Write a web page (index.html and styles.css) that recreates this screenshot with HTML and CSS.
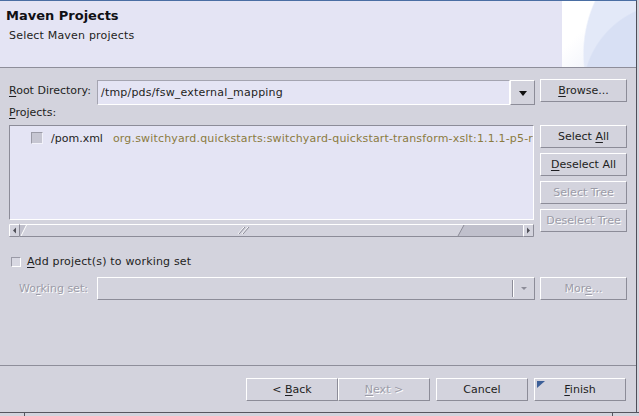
FILE: index.html
```html
<!DOCTYPE html>
<html>
<head>
<meta charset="utf-8">
<title>Maven Projects</title>
<link rel="stylesheet" href="styles.css">
</head>
<body>
<div class="frame">
  <div class="banner">
    <div class="titles">
      <div class="title">Maven Projects</div>
      <div class="subtitle">Select Maven projects</div>
    </div>
    <div class="corner"></div>
  </div>
  <div class="content">
    <div class="row root-row">
      <div class="lbl lbl-root"><u>R</u>oot Directory:</div>
      <div class="combo edit">
        <div class="combo-text">/tmp/pds/fsw_external_mapping</div>
        <div class="combo-btn"><span class="arrow-down"></span></div>
      </div>
      <button class="btn side"><u>B</u>rowse...</button>
    </div>
    <div class="lbl projects-lbl"><u>P</u>rojects:</div>
    <div class="row tree-row">
      <div class="treewrap">
        <div class="tree">
          <div class="tree-item">
            <span class="check"></span>
            <span class="pom">/pom.xml</span>
            <span class="gav">org.switchyard.quickstarts:switchyard-quickstart-transform-xslt:1.1.1-p5-redhat-1</span>
          </div>
        </div>
        <svg class="hscroll" width="525" height="13" viewBox="0 0 525 13">
          <rect x="0" y="0" width="525" height="13" fill="#c0c0cc"/>
          <line x1="0" y1="0.5" x2="525" y2="0.5" stroke="#ffffff"/>
          <line x1="0" y1="12.5" x2="525" y2="12.5" stroke="#8c8c98"/>
          <rect x="0" y="0" width="11" height="13" fill="#d3d3dd"/>
          <polyline points="0.5,12 0.5,0.5 10.5,0.5" fill="none" stroke="#ffffff"/>
          <polyline points="0.5,12.5 10.5,12.5 10.5,0.5" fill="none" stroke="#8c8c98"/>
          <polygon points="4,6.5 7,3.5 7,9.5" fill="#505058"/>
          <polygon points="12,12 17,1 455,1 449,12" fill="#d3d3dd"/>
          <line x1="17" y1="0.5" x2="455" y2="0.5" stroke="#ffffff"/>
          <line x1="12" y1="12" x2="17.5" y2="1" stroke="#ffffff"/>
          <line x1="449" y1="12" x2="455" y2="1" stroke="#8c8c98"/>
          <line x1="12" y1="12.5" x2="449" y2="12.5" stroke="#8c8c98"/>
          <g stroke-width="1">
            <line x1="229" y1="10" x2="235" y2="3" stroke="#ffffff"/>
            <line x1="230" y1="10" x2="236" y2="3" stroke="#8c8c98"/>
            <line x1="233" y1="10" x2="239" y2="3" stroke="#ffffff"/>
            <line x1="234" y1="10" x2="240" y2="3" stroke="#8c8c98"/>
          </g>
          <rect x="514" y="0" width="11" height="13" fill="#d3d3dd"/>
          <polyline points="514.5,12 514.5,0.5 524.5,0.5" fill="none" stroke="#ffffff"/>
          <polyline points="514.5,12.5 524.5,12.5 524.5,0.5" fill="none" stroke="#8c8c98"/>
          <polygon points="521,6.5 518,3.5 518,9.5" fill="#505058"/>
        </svg>
      </div>
      <div class="side-col">
        <button class="btn side">Select <u>A</u>ll</button>
        <button class="btn side"><u>D</u>eselect All</button>
        <button class="btn side disabled">Select Tree</button>
        <button class="btn side disabled">Deselect Tree</button>
      </div>
    </div>
    <div class="ws-check">
      <span class="check small"></span>
      <span class="wide"><u>A</u>dd project(s) to working set</span>
    </div>
    <div class="row ws-row">
      <div class="lbl lbl-ws disabled">Wo<u>r</u>king set:</div>
      <div class="combo ro">
        <div class="combo-fill"></div>
        <div class="combo-arrow"><span class="arrow-small"></span></div>
      </div>
      <button class="btn side disabled">Mor<u>e</u>...</button>
    </div>
  </div>
  <div class="footer">
    <button class="btn foot">&lt; <u>B</u>ack</button>
    <button class="btn foot disabled"><u>N</u>ext &gt;</button>
    <button class="btn foot gap">Cancel</button>
    <button class="btn foot gap default"><span class="flag"></span><u>F</u>inish</button>
  </div>
</div>
<div class="under">
  <span class="u1"></span><span class="u2"></span><span class="u3"></span>
</div>
</body>
</html>
```

FILE: styles.css
```css
html, body {
  margin: 0;
  padding: 0;
}
body {
  background: #d3d3dd;
  font-family: "DejaVu Sans", sans-serif;
  font-size: 11px;
  color: #1e1e22;
  width: 639px;
  height: 416px;
  overflow: hidden;
}
u {
  text-decoration: underline;
  text-underline-offset: 2px;
}
.frame {
  width: 636px;
  height: 411px;
  border-top: 1px solid #4a6ea3;
  border-right: 1px solid #4e4e58;
  display: flex;
  flex-direction: column;
}
.banner {
  height: 66px;
  display: flex;
  background: #e4e4f4;
  border-bottom: 1px solid #8e8e9a;
  flex: none;
}
.titles {
  flex: 1;
  padding: 7px 0 0 6px;
}
.title {
  font-weight: bold;
  font-size: 13px;
  line-height: 16px;
  color: #101014;
}
.subtitle {
  margin: 5px 0 0 3px;
  line-height: 14px;
  font-size: 11px;
  letter-spacing: 0.19px;
}
.corner {
  width: 74px;
  background:
    radial-gradient(circle at 150% 140%, #d8e0f4 0 62%, rgba(216,224,244,0) 63%),
    radial-gradient(circle at 200% 80%, #e3e9f8 0 80%, rgba(227,233,248,0) 81%),
    linear-gradient(135deg, #ffffff 35%, #e6ebf8 100%);
}
.content {
  flex: 1;
  padding: 11px 0 0 9px;
}
.row {
  display: flex;
  align-items: flex-start;
}
.lbl {
  white-space: nowrap;
}
.lbl-root {
  width: 88px;
  line-height: 23px;
}
.combo {
  width: 438px;
  box-sizing: border-box;
  display: flex;
}
.combo.edit {
  height: 25px;
  margin-top: 1px;
}
.combo-text {
  flex: 1;
  background: #e4e4f4;
  border: 1px solid;
  border-color: #a4a4b0 #ffffff #ffffff #a4a4b0;
  padding-left: 3px;
  line-height: 23px;
  white-space: nowrap;
  overflow: hidden;
  letter-spacing: 0.2px;
}
.combo-btn {
  width: 25px;
  box-sizing: border-box;
  border: 1px solid;
  border-color: #ffffff #8c8c98 #8c8c98 #ffffff;
  background: #d3d3dd;
  display: flex;
  align-items: center;
  justify-content: center;
}
.arrow-down {
  width: 0;
  height: 0;
  border-left: 4px solid transparent;
  border-right: 4px solid transparent;
  border-top: 5px solid #101010;
  margin-top: 1px;
}
.btn {
  box-sizing: border-box;
  height: 23px;
  border: 1px solid;
  border-color: #ffffff #8c8c98 #8c8c98 #ffffff;
  background: #d3d3dd;
  font-family: "DejaVu Sans", sans-serif;
  font-size: 11px;
  color: #1e1e22;
  padding: 0;
  margin: 0;
  line-height: 21px;
  white-space: nowrap;
}
.btn.side {
  width: 87px;
  margin-left: 5px;
}
.disabled {
  color: #9c9ca8;
  text-shadow: 1px 1px 0 #ffffff;
}
.projects-lbl {
  line-height: 14px;
  margin-top: 1px;
}
.tree-row {
  margin-top: 5px;
}
.treewrap {
  width: 525px;
  display: flex;
  flex-direction: column;
}
.tree {
  height: 95px;
  box-sizing: border-box;
  border: 1px solid;
  border-color: #8c8c98 #ffffff #ffffff #8c8c98;
  background: #e4e4f4;
  overflow: hidden;
}
.tree-item {
  display: flex;
  align-items: center;
  height: 18px;
  margin-top: 3px;
  white-space: nowrap;
  overflow: hidden;
}
.check {
  flex: none;
  width: 12px;
  height: 12px;
  box-sizing: border-box;
  background: #c6c6d2;
  border: 1px solid;
  border-color: #9a9aa6 #f2f2fa #f2f2fa #9a9aa6;
  margin-left: 21px;
}
.pom {
  flex: none;
  margin-left: 8px;
}
.gav {
  flex: 0 1 auto;
  min-width: 0;
  overflow: hidden;
  margin-left: 10px;
  color: #8b7b3f;
  letter-spacing: 0.17px;
}
.hscroll {
  display: block;
  margin-top: 4px;
}
.side-col {
  display: flex;
  flex-direction: column;
  gap: 5px;
  margin-left: 1px;
}
.ws-check {
  margin-top: 18px;
  display: flex;
  align-items: center;
  line-height: 14px;
}
.wide {
  letter-spacing: 0.17px;
}
.check.small {
  width: 10px;
  height: 10px;
  margin-left: 2px;
  margin-right: 6px;
  background: #d8d8e2;
  border-color: #9a9aa6 #ffffff #ffffff #9a9aa6;
}
.ws-row {
  margin-top: 8px;
}
.lbl-ws {
  width: 88px;
  box-sizing: border-box;
  padding-left: 10px;
  line-height: 23px;
}
.combo.ro {
  height: 23px;
  border: 1px solid;
  border-color: #ffffff #8c8c98 #8c8c98 #ffffff;
  background: #d3d3dd;
}
.combo-fill {
  flex: 1;
}
.combo-arrow {
  width: 21px;
  border-left: 1px solid #8c8c98;
  box-shadow: inset 1px 0 0 #ffffff;
  margin: 2px 0;
  display: flex;
  align-items: center;
  justify-content: center;
}
.arrow-small {
  width: 0;
  height: 0;
  border-left: 3px solid transparent;
  border-right: 3px solid transparent;
  border-top: 3px solid #8c8c98;
  margin-left: 1px;
}
.footer {
  flex: none;
  border-top: 1px solid #8e8e9a;
  padding: 12px 10px 0 0;
  box-sizing: border-box;
  height: 47px;
  display: flex;
  justify-content: flex-end;
  align-items: flex-start;
}
.btn.foot {
  width: 92px;
}
.btn.foot.gap {
  margin-left: 6px;
}
.default {
  position: relative;
}
.flag {
  position: absolute;
  left: 2px;
  top: 2px;
  width: 0;
  height: 0;
  border-top: 7px solid #3c5f98;
  border-right: 8px solid transparent;
}
.under {
  height: 4px;
  border-top: 1px solid #55555f;
  display: flex;
}
.u1 {
  width: 24px;
  border-right: 1px solid #55555f;
}
.u2 {
  width: 587px;
  border-right: 1px solid #55555f;
}
.u3 {
  flex: 1;
}
```
